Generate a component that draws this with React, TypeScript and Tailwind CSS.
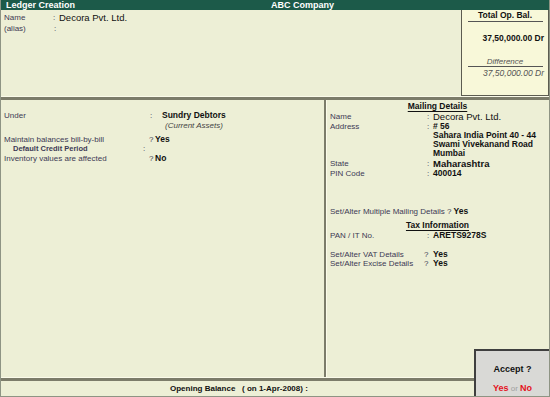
import React from 'react'

const label = 'text-[8px] leading-[9px] text-[#3d3a55]'
const value = 'text-[8.5px] leading-[9px] font-bold text-[#111]'

function Row({ name, sep = ':', children, labelW, className = '' }: { name: string; sep?: string; children?: React.ReactNode; labelW: string; className?: string }) {
  return (
    <div className={`flex items-start text-[8.5px] leading-[9px] ${className}`}>
      <div className={`${label} ${labelW} shrink-0`}>{name}</div>
      <div className={`${label} w-[6px] shrink-0`}>{sep}</div>
      <div className="text-[8.5px] leading-[9px]">{children}</div>
    </div>
  )
}

export default function App() {
  return (
    <div className="w-[550px] h-[397px] overflow-hidden bg-[#8e9484] px-[1px] pb-[1px] font-['Liberation_Sans',Arial,sans-serif]">
      <div className="relative flex flex-col h-full bg-[#edefd6]">
        {/* title bar */}
        <div className="h-[10px] flex items-center bg-[#1c5a49] text-white text-[9px] leading-none font-bold shrink-0">
          <div className="w-[270px] pl-[5px]">Ledger Creation</div>
          <div>ABC Company</div>
        </div>

        {/* top section */}
        <div className="flex h-[86px] shrink-0">
          <div className="flex-1 pt-[3px] pl-[3px]">
            <Row name="Name" labelW="w-[49px] text-[7.5px]">
              <span className="text-[9.5px] leading-[9px] text-[#111]">Decora Pvt. Ltd.</span>
            </Row>
            <Row name="(alias)" labelW="w-[50px] text-[7.5px]" className="mt-[1px]" />
          </div>
          <div className="w-[88px] bg-[#f8f8d9] border-l border-r border-b border-[#5c5c50] flex flex-col items-center pt-[1px] text-[8.5px] leading-[9px]">
            <div className={value}>Total Op. Bal.</div>
            <div className="w-[75px] h-[1px] bg-[#555] mt-[1px]" />
            <div className={`${value} self-end pr-[4px] mt-[12px]`}>37,50,000.00 Dr</div>
            <div className="text-[8px] leading-[9px] italic text-[#555] mt-[14px]">Difference</div>
            <div className="w-[75px] h-[1px] bg-[#555]" />
            <div className="text-[8.5px] leading-[9px] italic text-[#555] self-end pr-[4px] mt-[2px]">37,50,000.00 Dr</div>
          </div>
        </div>

        {/* divider */}
        <div className="h-[4px] shrink-0 border-t border-[#fbfbea] bg-[#7c7c6a]" />

        {/* middle */}
        <div className="flex flex-1">
          <div className="w-[323px] pt-[11px] pl-[3px]">
            <Row name="Under" labelW="w-[146px]">
              <div className={`${value} pl-[6px]`}>Sundry Debtors</div>
              <div className="text-[8px] leading-[9px] italic text-[#444] pl-[9px] mt-[1px]">(Current Assets)</div>
            </Row>
            <Row name="Maintain balances bill-by-bill" sep="?" labelW="w-[145px]" className="mt-[5px]">
              <span className={value}>Yes</span>
            </Row>
            <Row name="Default Credit Period" labelW="w-[139px] pl-[9px] font-bold !text-[7.5px]">
              <span />
            </Row>
            <Row name="Inventory values are affected" sep="?" labelW="w-[145px]" className="mt-[1px]">
              <span className={value}>No</span>
            </Row>
          </div>

          <div className="w-[3px] border-r border-[#fbfbea] bg-[#7c7c6a]" />

          <div className="flex-1 pt-[2px] pl-[3px] pr-[4px] text-[8.5px] leading-[9px]">
            <div className="flex justify-center">
              <span className={`${value} underline underline-offset-[2px]`}>Mailing Details</span>
            </div>
            <Row name="Name" labelW="w-[97px]" className="mt-[1px]">
              <span className="text-[9.5px] leading-[9px] text-[#111]">Decora Pvt. Ltd.</span>
            </Row>
            <Row name="Address" labelW="w-[97px]">
              <div className={`${value} leading-[8.5px]`}>
                <div># 56</div>
                <div>Sahara India Point 40 - 44</div>
                <div>Swami Vivekanand Road</div>
                <div>Mumbai</div>
              </div>
            </Row>
            <Row name="State" labelW="w-[97px]" className="mt-[1px]">
              <span className="text-[9.5px] leading-[9px] font-bold text-[#111]">Maharashtra</span>
            </Row>
            <Row name="PIN Code" labelW="w-[97px]">
              <span className={value}>400014</span>
            </Row>

            <div className="mt-[29px] flex items-start">
              <span className={label}>Set/Alter Multiple Mailing Details ?&nbsp;</span>
              <span className={value}>Yes</span>
            </div>
            <div className="flex justify-center mt-[5px]">
              <span className={`${value} underline underline-offset-[2px]`}>Tax Information</span>
            </div>
            <Row name="PAN / IT No." labelW="w-[97px]" className="mt-[1px]">
              <span className={value}>ARETS9278S</span>
            </Row>
            <Row name="Set/Alter VAT Details" sep="?" labelW="w-[94px]" className="mt-[10px]">
              <span className={`${value} pl-[3px]`}>Yes</span>
            </Row>
            <Row name="Set/Alter Excise Details" sep="?" labelW="w-[94px]">
              <span className={`${value} pl-[3px]`}>Yes</span>
            </Row>
          </div>
        </div>

        {/* bottom */}
        <div className="h-[4px] shrink-0 border-t border-[#fbfbea] bg-[#7c7c6a]" />
        <div className="h-[15px] shrink-0 flex items-center pl-[169px] text-[8px] leading-[9px]">
          <span className={`${value} text-[8px] whitespace-pre`}>Opening Balance   ( on 1-Apr-2008) :</span>
        </div>

        {/* accept box */}
        <div className="absolute right-0 bottom-0 w-[75px] h-[47px] bg-[#d9d9d6] border-l-2 border-t-2 border-[#3f3f3f] flex flex-col items-center text-[9px] leading-[9px]">
          <div className="text-[9px] font-bold text-[#111] mt-[14px] leading-[9px]">Accept ?</div>
          <div className="mt-[10px] text-[9px] leading-[9px] font-bold">
            <span className="text-[#e4121d]">Yes</span>
            <span className="text-[#a0a0a0] font-normal text-[8px]"> or </span>
            <span className="text-[#e4121d]">No</span>
          </div>
        </div>
      </div>
    </div>
  )
}
